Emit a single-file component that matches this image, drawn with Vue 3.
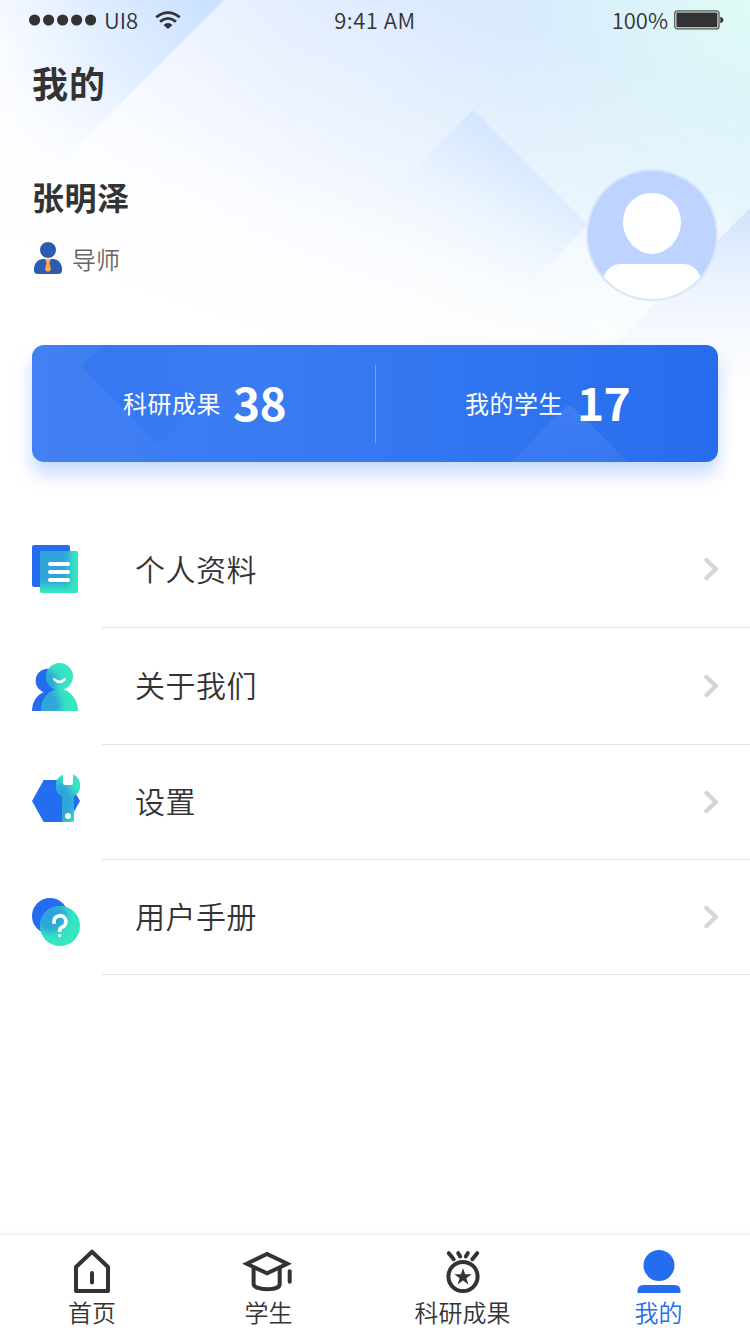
<script setup>
const rows = [
  { key: 'profile', label: '个人资料' },
  { key: 'about', label: '关于我们' },
  { key: 'settings', label: '设置' },
  { key: 'manual', label: '用户手册' },
]
</script>

<template>
  <div class="page">
    <svg class="backdrop" width="750" height="400" viewBox="0 0 750 400">
      <defs>
        <linearGradient id="wash" x1="0" y1="0" x2="1" y2="0">
          <stop offset="0" stop-color="#f3f7ff" />
          <stop offset=".38" stop-color="#e0ebff" />
          <stop offset=".68" stop-color="#d8e9fd" />
          <stop offset="1" stop-color="#dbf1fc" />
        </linearGradient>
        <linearGradient id="fade" gradientUnits="userSpaceOnUse" x1="420" y1="-10" x2="300" y2="350">
          <stop offset="0" stop-color="#fff" stop-opacity="0" />
          <stop offset=".35" stop-color="#fff" stop-opacity=".38" />
          <stop offset=".7" stop-color="#fff" stop-opacity=".86" />
          <stop offset="1" stop-color="#fff" />
        </linearGradient>
        <radialGradient id="mint" gradientUnits="userSpaceOnUse" cx="750" cy="10" r="300">
          <stop offset="0" stop-color="#defbf5" />
          <stop offset=".3" stop-color="#def8f7" stop-opacity=".6" />
          <stop offset=".6" stop-color="#def8f7" stop-opacity=".2" />
          <stop offset="1" stop-color="#def8f7" stop-opacity="0" />
        </radialGradient>
        <linearGradient id="corner" gradientUnits="userSpaceOnUse" x1="215" y1="0" x2="0" y2="75">
          <stop offset="0" stop-color="#c8e0ff" />
          <stop offset=".5" stop-color="#deecff" />
          <stop offset="1" stop-color="#fafcff" />
        </linearGradient>
        <linearGradient id="cornerAlpha" x1="0" y1="0" x2="0" y2="1">
          <stop offset="0" stop-color="#fff" />
          <stop offset=".35" stop-color="#ccc" />
          <stop offset=".85" stop-color="#000" />
        </linearGradient>
        <mask id="cornerMask">
          <rect width="240" height="210" fill="url(#cornerAlpha)" />
        </mask>
        <linearGradient id="diamond" gradientUnits="userSpaceOnUse" x1="510" y1="120" x2="435" y2="245">
          <stop offset="0" stop-color="#cbe3ff" stop-opacity=".95" />
          <stop offset=".45" stop-color="#dcebff" stop-opacity=".5" />
          <stop offset="1" stop-color="#f5f9ff" stop-opacity="0" />
        </linearGradient>
        <linearGradient id="pane" gradientUnits="userSpaceOnUse" x1="600" y1="190" x2="600" y2="345">
          <stop offset="0" stop-color="#f6f9ff" stop-opacity="0" />
          <stop offset=".3" stop-color="#f8faff" stop-opacity=".5" />
          <stop offset=".8" stop-color="#fdfeff" stop-opacity=".5" />
          <stop offset="1" stop-color="#fdfeff" stop-opacity=".4" />
        </linearGradient>
        <linearGradient id="edge" gradientUnits="userSpaceOnUse" x1="0" y1="208" x2="0" y2="400">
          <stop offset="0" stop-color="#d1e4fc" />
          <stop offset=".3" stop-color="#e6f0fe" />
          <stop offset=".6" stop-color="#f5f8fe" />
          <stop offset="1" stop-color="#fff" />
        </linearGradient>
      </defs>
      <rect width="750" height="400" fill="url(#wash)" />
      <rect width="750" height="400" fill="url(#mint)" />
      <rect width="750" height="400" fill="url(#fade)" />
      <path d="M0 0H224L28 196H0Z" fill="url(#corner)" mask="url(#cornerMask)" />
      <path d="M473 110L588 225L430 383L315 268Z" fill="url(#diamond)" />
      <path d="M540 273L625 188H730V340H607Z" fill="url(#pane)" />
      <path d="M750 208V400H558Z" fill="url(#edge)" />
    </svg>

    <header class="status">
      <div class="carrier">
        <svg width="67" height="12" viewBox="0 0 67 12" fill="#333">
          <circle v-for="n in 5" :key="n" :cx="n * 14 - 8.4" cy="6" r="5.6" />
        </svg>
        <span>UI8</span>
        <svg class="wifi" width="26" height="18" viewBox="0 0 26 18" fill="none" stroke="#333" stroke-width="2.7">
          <path d="M1.2 6.3Q13 -3.2 24.8 6.3" />
          <path d="M5 10.6Q13 4.2 21 10.6" />
          <path d="M8.5 14Q13 10.2 17.5 14L13 18Z" fill="#333" stroke="none" />
        </svg>
      </div>
      <span class="time">9:41 AM</span>
      <div class="power">
        <span>100%</span>
        <svg width="50" height="20" viewBox="0 0 50 20">
          <rect x=".7" y=".9" width="44.4" height="18" rx="3" fill="#d9efee" stroke="#4b5554" stroke-width="1.2" />
          <rect x="2.4" y="2.6" width="41" height="14.6" rx="1.2" fill="#333" />
          <path d="M46.3 6.8q3 .8 3 3.2t-3 3.2Z" fill="#333" />
        </svg>
      </div>
    </header>

    <h1 class="title">我的</h1>

    <section class="user">
      <div class="who">
        <h2 class="name">张明泽</h2>
        <div class="role">
          <svg width="28" height="32" viewBox="0 0 28 32" fill="#2b5cb0">
            <circle cx="14" cy="8" r="8" />
            <path d="M0 27C0 21 4.5 17 9 17H19C23.500 17 28 21 28 27V28.500Q28 32 24 32H4Q0 32 0 28.500Z" />
            <path d="M11 17H17L15.600 20.500L17 28L14 30L11 28L12.400 20.500Z" fill="#fda84c" />
          </svg>
          <span>导师</span>
        </div>
      </div>
      <svg class="avatar" width="132" height="132" viewBox="0 0 132 132">
        <defs>
          <clipPath id="face"><circle cx="66" cy="66" r="64" /></clipPath>
        </defs>
        <circle cx="66" cy="66" r="66" fill="#d7e8fd" />
        <circle cx="66" cy="66" r="64" fill="#bed4ff" />
        <g clip-path="url(#face)" fill="#fff">
          <path d="M66 24C83 24 95 37 95 53C95 70 81 85 66 85S37 70 37 53C37 37 49 24 66 24Z" />
          <rect x="17" y="95" width="98" height="60" rx="18" />
        </g>
      </svg>
    </section>

    <section class="stats">
      <svg class="pattern" width="686" height="117" viewBox="0 0 686 117">
        <defs>
          <linearGradient id="tileA" gradientUnits="userSpaceOnUse" x1="70" y1="50" x2="210" y2="20">
            <stop offset="0" stop-color="#2b70ef" stop-opacity=".5" />
            <stop offset="1" stop-color="#2b70ef" stop-opacity="0" />
          </linearGradient>
          <linearGradient id="tileB" x1="0" y1="0" x2="0" y2="1">
            <stop offset="0" stop-color="#4882f3" stop-opacity=".65" />
            <stop offset="1" stop-color="#4882f3" stop-opacity=".4" />
          </linearGradient>
        </defs>
        <path d="M72 0L52.500 18.500Q49 22 52.500 26L123 96Q127 100 131 96L226 0Z" fill="url(#tileA)" />
        <path d="M479 117L533 62.500Q537 58.500 541 62.500L597 117Z" fill="url(#tileB)" />
      </svg>
      <div class="stat first"><span>科研成果</span><b>38</b></div>
      <i class="divider"></i>
      <div class="stat second"><span>我的学生</span><b>17</b></div>
    </section>

    <ul class="menu">
      <li v-for="row in rows" :key="row.key" :class="['row', row.key]">
        <svg v-if="row.key === 'profile'" class="icon" width="48" height="48" viewBox="0 0 48 48">
          <defs>
            <filter id="soft" x="-30%" y="-30%" width="160%" height="160%"><feGaussianBlur stdDeviation="3.500" /></filter>
            <clipPath id="c1"><rect x="8" y="6" width="38" height="42" rx="2" /></clipPath>
          </defs>
          <rect width="38" height="42" rx="2" fill="#246cf0" />
          <rect x="8" y="6" width="38" height="42" rx="2" fill="#36e6c0" />
          <g clip-path="url(#c1)"><rect x="-8" y="-8" width="46" height="49" fill="#2fa5da" filter="url(#soft)" /></g>
          <path d="M18 19H36M18 27H36M18 35H36" stroke="#fff" stroke-width="4" stroke-linecap="round" />
        </svg>
        <svg v-else-if="row.key === 'about'" class="icon" width="48" height="48" viewBox="0 0 48 48">
          <defs>
            <clipPath id="c2">
              <circle cx="27.500" cy="13.500" r="13.500" />
              <path d="M9 48C9 38 15 29.500 23 26.500H32C40 29.500 46 38 46 48Z" />
            </clipPath>
          </defs>
          <g fill="#246cf0">
            <circle cx="15.600" cy="17.800" r="12" />
            <path d="M0 48C0 39 5 31.500 12 29H30V48Z" />
          </g>
          <g clip-path="url(#c2)">
            <rect width="48" height="48" fill="#36e6c0" />
            <g fill="#2fa5da" filter="url(#soft)">
              <circle cx="14.500" cy="18" r="11.500" />
              <path d="M0 52V36L12 28H23L29 36V52Z" />
            </g>
          </g>
          <path d="M22.300 16.300Q27.500 21.500 32.700 16.300" fill="none" stroke="#fff" stroke-width="2.500" stroke-linecap="round" />
        </svg>
        <svg v-else-if="row.key === 'settings'" class="icon" width="48" height="48" viewBox="0 0 48 48">
          <defs>
            <clipPath id="c3">
              <path d="M31 .5V9.500Q31 11 32.500 11H39.500Q41 11 41 9.500V.5A12.200 12.200 0 0 1 41.300 22.600L42 46Q42 48 40 48H32Q30 48 30 46L30.700 22.600A12.200 12.200 0 0 1 31 .5Z" />
            </clipPath>
          </defs>
          <path d="M11.700 6H36.300L48 27L36.300 48H11.700L0 27Z" fill="#246cf0" />
          <path d="M31 5H41V9.500Q41 11 39.500 11H32.500Q31 11 31 9.500Z" fill="#fff" />
          <g clip-path="url(#c3)">
            <rect width="48" height="48" fill="#36e6c0" />
            <path d="M11.700 8H34L46 27L38 48H11.700L0 27Z" fill="#2fa5da" filter="url(#soft)" />
          </g>
          <circle cx="36" cy="42" r="3" fill="#fff" />
        </svg>
        <svg v-else class="icon" width="48" height="48" viewBox="0 0 48 48">
          <defs><clipPath id="c4"><circle cx="28" cy="28" r="20" /></clipPath></defs>
          <circle cx="18" cy="18" r="18" fill="#246cf0" />
          <circle cx="28" cy="28" r="20" fill="#36e6c0" />
          <g clip-path="url(#c4)"><circle cx="18" cy="18" r="17" fill="#2fa5da" filter="url(#soft)" /></g>
          <path d="M22 24.300A6 6 0 1 1 29.500 29.500Q27.700 30 27.700 34" fill="none" stroke="#fff" stroke-width="3.800" />
          <circle cx="22" cy="24.300" r="1.900" fill="#fff" />
          <circle cx="27.600" cy="37.600" r="1.600" fill="#fff" />
        </svg>
        <div class="cell">
          <span class="label">{{ row.label }}</span>
          <svg class="chevron" width="16" height="24" viewBox="0 0 16 24" fill="none" stroke="#d2d5da" stroke-width="4.400" stroke-linecap="round" stroke-linejoin="round">
            <path d="M3.500 3L12.800 12L3.500 21" />
          </svg>
        </div>
      </li>
    </ul>

    <nav class="tabs">
      <a class="tab">
        <svg width="50" height="46" viewBox="0 0 50 46" fill="none" stroke="#333" stroke-width="4" stroke-linejoin="round" stroke-linecap="round">
          <path d="M9 18L25 2.700L41 18V42H9Z" />
          <path d="M25 24V33.500" />
        </svg>
        <span>首页</span>
      </a>
      <a class="tab student">
        <svg width="50" height="46" viewBox="0 0 50 46" fill="none" stroke="#333" stroke-width="4">
          <path d="M4.700 14.700L25 5L45.300 14.700L25 24.400Z" />
          <path d="M11.600 18V35C11.600 38 17 40.200 25 40.200S37.700 38 37.700 35V18" />
          <path d="M47.700 22.300V32.700" stroke-linecap="round" />
        </svg>
        <span>学生</span>
      </a>
      <a class="tab">
        <svg width="50" height="46" viewBox="0 0 50 46" fill="none" stroke="#333" stroke-width="4" stroke-linecap="round">
          <circle cx="25" cy="27.500" r="14.600" />
          <path d="M10.800 4.200L15.700 10.200M39.200 4.200L34.300 10.200M20.200 4.200L22.200 7.500M29.800 4.200L27.800 7.500" />
          <path d="M25 19L27.100 25.300H33.700L28.400 29.200L30.400 35.500L25 31.600L19.600 35.500L21.600 29.200L16.300 25.300H22.900Z" fill="#333" stroke="none" />
        </svg>
        <span>科研成果</span>
      </a>
      <a class="tab active">
        <svg width="50" height="46" viewBox="0 0 50 46" fill="#246cf0">
          <circle cx="25" cy="16.500" r="15.500" />
          <path d="M3.500 44V42Q3.500 36 9.500 36H40.500Q46.500 36 46.500 42V44Z" />
        </svg>
        <span>我的</span>
      </a>
    </nav>
  </div>
</template>

<style>
body {
  background: #fff;
}
</style>

<style scoped>
.page {
  position: relative;
  display: flex;
  flex-direction: column;
  width: 750px;
  height: 1334px;
  overflow: hidden;
  color: #333;
  font-family: "Noto Sans CJK SC", sans-serif;
  font-weight: 350;
}
.page svg {
  display: block;
  flex: none;
}
.page .backdrop {
  position: absolute;
  top: 0;
  left: 0;
}
.status {
  position: relative;
  display: grid;
  grid-template-columns: 1fr auto 1fr;
  align-items: center;
  height: 40px;
  padding: 0 26px 0 29px;
  font-size: 22px;
  line-height: 38px;
}
.status span {
  padding-bottom: 2px;
}
.carrier,
.power {
  display: flex;
  align-items: center;
}
.carrier {
  gap: 8px;
}
.wifi {
  margin-left: 9px;
}
.power {
  justify-content: flex-end;
  gap: 6px;
}
.time {
  margin-right: 3px;
  letter-spacing: 0.5px;
}
.title {
  position: relative;
  margin: 16px 0 0 32px;
  font-size: 36px;
  line-height: 52px;
  font-weight: 700;
  letter-spacing: 1px;
}
.user {
  position: relative;
  display: flex;
  justify-content: space-between;
  margin: 61px 32px 0;
}
.name {
  margin: 0;
  padding-top: 4px;
  font-size: 32px;
  line-height: 46px;
  font-weight: 700;
  letter-spacing: 0.6px;
}
.role {
  display: flex;
  align-items: center;
  gap: 10px;
  margin: 22px 0 0 2px;
  color: #666;
  font-size: 24px;
  line-height: 32px;
}
.role span {
  padding-top: 2px;
}
.stats {
  position: relative;
  display: flex;
  align-items: center;
  height: 117px;
  margin: 44px 32px 0;
  border-radius: 12px;
  background: linear-gradient(90deg, #4280f3 0%, #3578f1 50%, #266dee 100%);
  box-shadow: 0 12px 18px rgba(38, 108, 238, 0.26);
  color: #fff;
}
.page .pattern {
  position: absolute;
  inset: 0;
}
.stat {
  position: relative;
  display: flex;
  align-items: center;
}
.stat span {
  padding-bottom: 2px;
  font-size: 24px;
  line-height: 36px;
  font-weight: 400;
  letter-spacing: 0.5px;
}
.stat b {
  padding-bottom: 6px;
  font-size: 46px;
  line-height: 60px;
  font-weight: 700;
  letter-spacing: -0.7px;
}
.first {
  width: 252px;
  gap: 12px;
  padding-left: 91px;
}
.second {
  gap: 14px;
  padding-left: 89px;
}
.divider {
  width: 1px;
  height: 78px;
  background: rgba(255, 255, 255, 0.3);
}
.menu {
  position: relative;
  margin: 50px 0 0;
  padding: 0;
  list-style: none;
}
.row {
  display: flex;
  gap: 22px;
  height: 115px;
  padding-left: 32px;
}
.profile {
  height: 116px;
}
.about {
  height: 117px;
}
.icon {
  margin-top: 33px;
}
.about .icon {
  margin-top: 35px;
}
.settings .icon {
  margin-top: 29px;
}
.manual .icon {
  margin-top: 38px;
}
.cell {
  display: flex;
  flex: 1;
  align-items: center;
  justify-content: space-between;
  padding: 0 31px 1px 33px;
  border-bottom: 1px solid #e4e5e7;
}
.label {
  padding-bottom: 3px;
  font-size: 30px;
  line-height: 44px;
  letter-spacing: 0.5px;
}
.tabs {
  position: relative;
  display: grid;
  grid-template-columns: 184px 169px 219px 173px;
  height: 99px;
  margin-top: auto;
  background: #fff;
  box-shadow: 0 -1px 4px rgba(0, 0, 0, 0.09);
}
.tab {
  display: flex;
  flex-direction: column;
  align-items: center;
  padding-top: 14px;
  font-size: 24px;
  line-height: 33px;
}
.tab.student svg {
  margin-right: 4px;
}
.active {
  color: #246cf0;
}
</style>
